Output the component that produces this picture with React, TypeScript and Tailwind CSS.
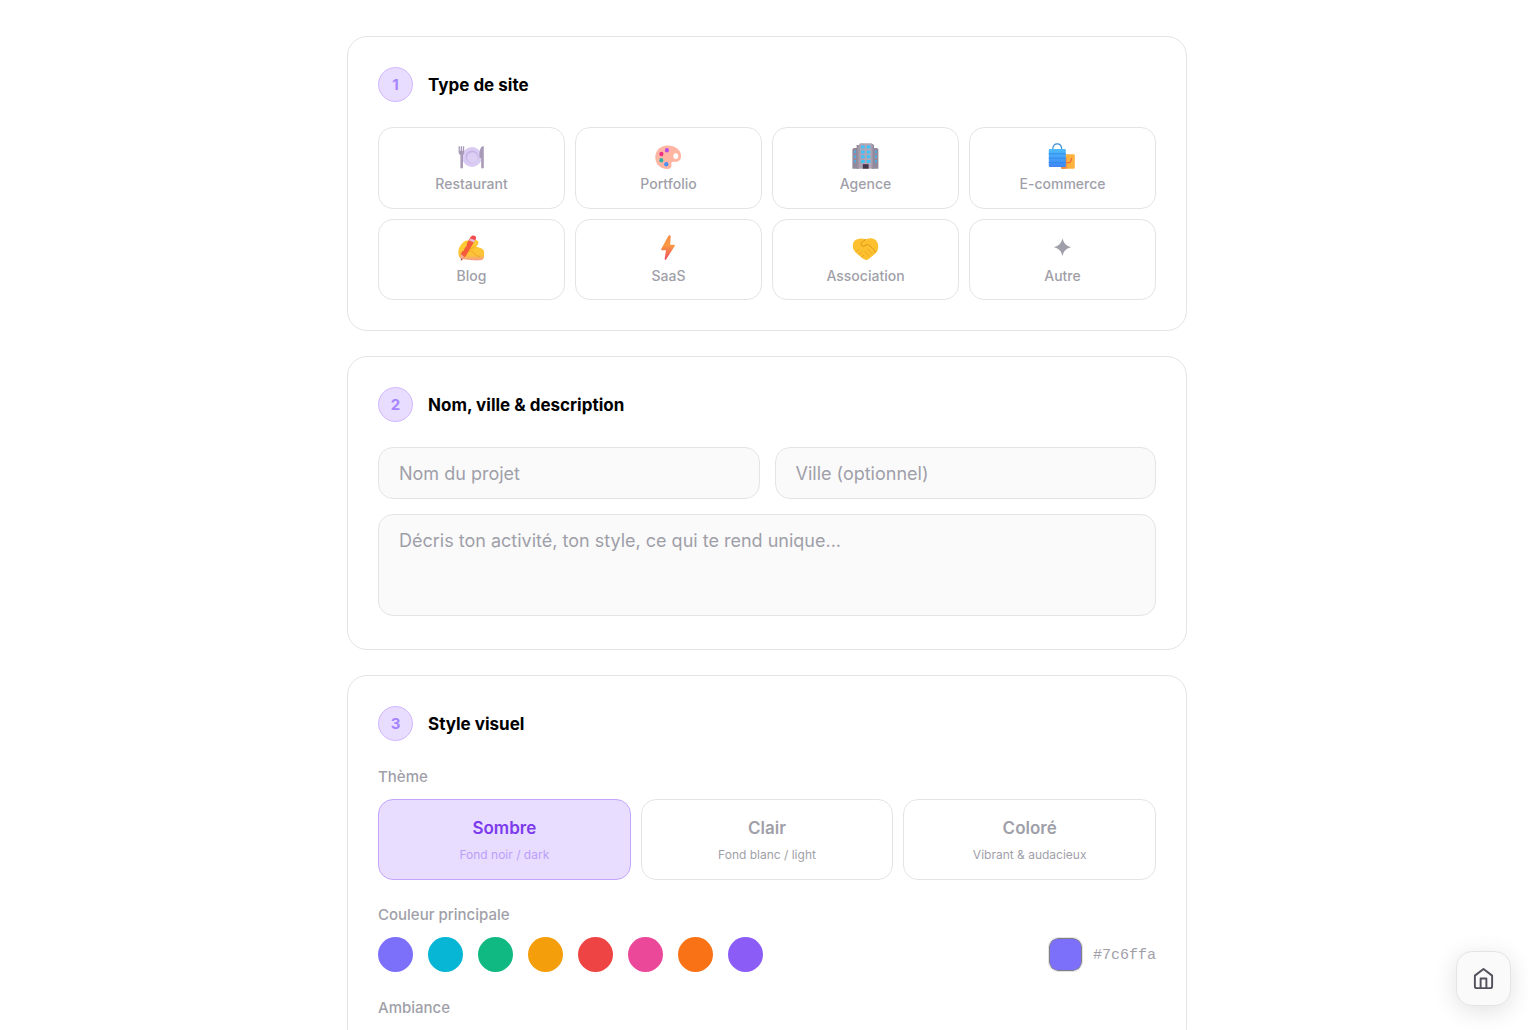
import { useState } from "react";
import type { ReactNode } from "react";

const RestaurantIcon = () => (
  <svg width="28" height="28" viewBox="1 0 28 28" aria-hidden="true">
    <circle cx="15" cy="14" r="9.9" fill="#d9cbf3" />
    <circle cx="15" cy="14" r="6.4" fill="#c6b5e6" />
    <circle cx="15.5" cy="14.7" r="5.4" fill="#dccff4" />
    <path
      d="M1.6 3.2h1.3v4.6h.8V3.200h1.400v4.600h.8V3.200h1.300v6.400c0 1.300-.6 2-1.200 2.400v12.500c0 1.200-2.600 1.200-2.600 0V12c-1-.4-1.800-1.100-1.800-2.400z"
      fill="#a99bb8"
    />
    <path
      d="M26.800 3.400v21.100c0 1.200-2.600 1.200-2.600 0V15h-1.600c-.5-4 0-12.600 4.200-11.600z"
      fill="#a99bb8"
    />
  </svg>
);

const PortfolioIcon = () => (
  <svg width="28" height="28" viewBox="1 1 28 28" aria-hidden="true">
    <path
      d="M13.500 3.600C6.500 3.600 1.300 8.600 1.300 15.300c0 6.700 5 11.700 11.700 11.700 3.400 0 4.900-1.800 4.400-4.500-.4-2.200.6-3 2.700-2.700 4.200.6 7-1.600 7-5.700 0-6-6-10.500-13.600-10.500zM21.800 11.200a2.500 2.900 0 1 1 0 5.800 2.500 2.900 0 0 1 0-5.800z"
      fill="#ffb5a2"
      fillRule="evenodd"
    />
    <ellipse cx="12.900" cy="8.200" rx="2" ry="2.200" fill="#b54be6" />
    <ellipse cx="7.400" cy="12" rx="2.100" ry="2.200" fill="#ee2f86" />
    <ellipse cx="7.300" cy="18.300" rx="2" ry="2.300" fill="#2fb3ac" />
    <ellipse cx="12.300" cy="22.200" rx="2.100" ry="2.300" fill="#4a8ff5" />
  </svg>
);

const AgenceIcon = () => (
  <svg width="28" height="28" viewBox="0 0 28 28" aria-hidden="true">
    <defs>
      <linearGradient id="tower">
        <stop offset="0" stopColor="#8f8796" />
        <stop offset=".2" stopColor="#aca2b3" />
        <stop offset=".8" stopColor="#b3a9ba" />
        <stop offset="1" stopColor="#8d8396" />
      </linearGradient>
    </defs>
    <path d="M.4 6.200l1.200-1.200h5v20.700H.4zM20 5h5l1.400 1.200v19.500H20z" fill="#93899c" />
    <path
      d="M2.200 7.500h1.600v2.600H2.200zM2.200 12.300h1.600v2.600H2.200zM2.200 17.100h1.600v2.600H2.200zM23 7.500h1.600v2.600H23zM23 12.300h1.600v2.600H23zM23 17.100h1.600v2.600H23z"
      fill="#42b2ee"
    />
    <path d="M8 .2h11.500L22 2v23.700H4.600V2H7z" fill="url(#tower)" />
    <g fill="#3fc3fa">
      <rect x="9" y="2.600" width="3.600" height="3" rx=".6" />
      <rect x="14.800" y="2.600" width="3.600" height="3" rx=".6" />
      <rect x="9" y="7.400" width="3.600" height="3" rx=".6" />
      <rect x="14.800" y="7.400" width="3.600" height="3" rx=".6" />
      <rect x="9" y="12.200" width="3.600" height="3" rx=".6" />
      <rect x="14.800" y="12.200" width="3.600" height="3" rx=".6" />
      <rect x="9" y="17" width="3.600" height="3" rx=".6" />
      <rect x="14.800" y="17" width="3.600" height="3" rx=".6" />
    </g>
    <rect x="10.800" y="21.200" width="5.800" height="4.500" fill="#44364f" />
  </svg>
);

const ShopIcon = () => (
  <svg
    width="28"
    height="28"
    viewBox="1 0 28 28"
    className="overflow-visible"
    aria-hidden="true"
  >
    <defs>
      <linearGradient id="bag" x1="0" y1="0" x2="0" y2="1">
        <stop offset="0" stopColor="#4dbcfb" />
        <stop offset="1" stopColor="#3f86f5" />
      </linearGradient>
    </defs>
    <rect x="13" y="11.300" width="13.800" height="14.500" rx="1" fill="#fdb13f" />
    <path d="M13 24h4.500v-9h1.300v10.800H14c-.6 0-1-.4-1-1z" fill="#f28b45" />
    <path
      d="M18.500 19.500c3 1.200 5-.6 5-4.500"
      fill="none"
      stroke="#ee6b35"
      strokeWidth="1.200"
    />
    <path
      d="M4.800 9.500V6C4.800 2.500 6.800.8 9.200.8s4.400 1.700 4.400 5.200v3.500"
      fill="none"
      stroke="#3a8ed3"
      strokeWidth="1.200"
    />
    <rect x=".8" y="6" width="17" height="18" rx="1" fill="url(#bag)" />
    <path
      d="M.8 10.800h17M.8 15.200h17M.8 19.600h17"
      stroke="#2d83ea"
      strokeWidth=".8"
    />
  </svg>
);

const BlogIcon = () => (
  <svg width="28" height="28" viewBox="1 0 28 28" aria-hidden="true">
    <defs>
      <linearGradient id="hand" x1="0" y1="0" x2="0" y2="1">
        <stop offset="0" stopColor="#fdca2e" />
        <stop offset=".75" stopColor="#fcc23a" />
        <stop offset="1" stopColor="#f79a8e" />
      </linearGradient>
    </defs>
    <path
      d="M1.600 15c.6-3.400 4-8.200 8-9.400 1.700-.5 4 .3 4.500 2l3.600-2.400c1.900-.8 4 .5 3.600 2.800-.3 1.700-1 2.600-2 3.600 2.600 1.600 4.300 1 6.400 2.600 1.400 1 1.500 2.500 1.400 4.200-.1 2.400.2 5-1.300 6.200-1.700 1-7.500.9-10.500.7l-11-1.300C1.500 22.500 1 18.700 1.600 15z"
      fill="url(#hand)"
    />
    <path
      d="M10.500 16.500c3-1.400 5.500-.2 6.500 1.500 1 2 2.800 3.500 5.500 3.400M17.500 12c-2 1.300-3.700 1.800-5 1.800"
      fill="none"
      stroke="#f0a222"
      strokeWidth=".9"
      strokeLinecap="round"
    />
    <path d="M13.400 2.200c.9-2 6-.2 5.200 2L9 20.800l-4.600 4.700-.6-6.500z" fill="#f45c3c" />
    <path d="M14.800.8c1.500-1 4.600.3 4.300 2.200l-.9 2.200-4.600-1.800z" fill="#f24a52" />
    <path d="M13.400 3.500l4.700 1.800-1.100 2.200-4.700-2z" fill="#e7b9d4" />
    <path d="M3.800 19l3.600 2.900-3.300 3.600z" fill="#f3a995" />
    <path d="M3.900 23.200l1.500 1-1.500 1.500z" fill="#82424f" />
    <path
      d="M1.800 16.200C2.500 13 5 9.500 7.600 8.300c2.300-.2 3 1.600 1.800 3-1.400 1.500-2.400 2.800-2.900 4.800z"
      fill="#fecb35"
    />
  </svg>
);

const BoltIcon = () => (
  <svg width="28" height="28" viewBox="1 0 28 28" aria-hidden="true">
    <defs>
      <linearGradient id="bolt" x1="0" y1="0" x2="0" y2="1">
        <stop offset="0" stopColor="#f68b4c" />
        <stop offset=".4" stopColor="#fb9a40" />
        <stop offset="1" stopColor="#f0495f" />
      </linearGradient>
    </defs>
    <path
      d="M14.300.9L7.200 14c-.3.700 0 1.200.6 1.200H12l-1.300 8.600c-.1 1.200.9 1.500 1.500.5L20.700 11c.4-.7.100-1.200-.6-1.200h-4l.6-8.400c.1-1.300-1.600-1.700-2.400-.5z"
      fill="url(#bolt)"
    />
  </svg>
);

const HandshakeIcon = () => (
  <svg width="28" height="28" viewBox="0 0 28 28" aria-hidden="true">
    <path
      d="M5 4.200c3-1.200 6.400-1 8.700.2 2.600-1.200 6-1.500 8.800-.2 2.700 1.200 3.800 4.500 3.700 7.800-.1 2.800-.9 4.800-2.900 6.500l-5 4.300c-1.400 1.200-2.400 2.200-3.800 2.200-1.700 0-3.300-1.200-4.700-2.300L4.300 18C1.800 15.800.9 13.800.8 11 .7 8 2 5.400 5 4.200z"
      fill="#fdc02f"
    />
    <path
      d="M13.700 4.400L9.500 7.700c-1.600 1.500.5 4.400 2.600 3.300l3.300-1.600c3 1.200 6 4.300 8 7.600"
      fill="none"
      stroke="#dd951d"
      strokeWidth="1"
      strokeLinecap="round"
    />
    <path
      d="M15.500 14l4.600 4.800M12.700 16.500l4.500 4.500M4.200 17l2.200-2.500M7 19.500l2.200-2.500M10 22l2-2.300"
      fill="none"
      stroke="#eba026"
      strokeWidth=".9"
      strokeLinecap="round"
    />
  </svg>
);

const StarIcon = () => (
  <svg width="28" height="28" viewBox="1 0 28 28" aria-hidden="true">
    <path
      d="M14.500 3.600c1.500 5.200 3.300 7.100 8.600 8.700-5.300 1.600-7.100 3.500-8.600 8.700-1.500-5.200-3.300-7.100-8.600-8.700 5.300-1.600 7.100-3.500 8.600-8.700z"
      fill="#9f9fa9"
    />
  </svg>
);

const siteTypes = [
  { label: "Restaurant", icon: <RestaurantIcon /> },
  { label: "Portfolio", icon: <PortfolioIcon /> },
  { label: "Agence", icon: <AgenceIcon /> },
  { label: "E-commerce", icon: <ShopIcon /> },
  { label: "Blog", icon: <BlogIcon /> },
  { label: "SaaS", icon: <BoltIcon /> },
  { label: "Association", icon: <HandshakeIcon /> },
  { label: "Autre", icon: <StarIcon /> },
];

const themes = [
  { name: "Sombre", hint: "Fond noir / dark" },
  { name: "Clair", hint: "Fond blanc / light" },
  { name: "Coloré", hint: "Vibrant & audacieux" },
];

const colors = [
  { value: "#7c6ffa", className: "bg-[#7c6ffa]" },
  { value: "#06b6d4", className: "bg-[#06b6d4]" },
  { value: "#10b981", className: "bg-[#10b981]" },
  { value: "#f59e0b", className: "bg-[#f59e0b]" },
  { value: "#ef4444", className: "bg-[#ef4444]" },
  { value: "#ec4899", className: "bg-[#ec4899]" },
  { value: "#f97316", className: "bg-[#f97316]" },
  { value: "#8b5cf6", className: "bg-[#8b5cf6]" },
];

const fieldClass =
  "block w-full rounded-[15px] border border-[#e4e4e7] bg-[#fafafa] px-5 text-[18px] text-black outline-none placeholder:text-[#9f9fa9]";

type StepProps = { number: number; title: string; children: ReactNode };

const Step = ({ number, title, children }: StepProps) => {
  return (
    <section className="rounded-[20px] border border-[#e4e4e7] bg-white p-[30px]">
      <div className="mb-[25px] flex items-center gap-[15px]">
        <span className="flex size-[35px] items-center justify-center rounded-full border border-[#d0b8fd] bg-[#e8dcff] text-[15px] leading-[23px] font-bold text-[#a684ff]">
          {number}
        </span>
        <h2 className="text-[17px] leading-[26px] font-bold text-black">
          {title}
        </h2>
      </div>
      {children}
    </section>
  );
};

const App = () => {
  const [siteType, setSiteType] = useState("");
  const [theme, setTheme] = useState("Sombre");
  const [color, setColor] = useState("#7c6ffa");

  return (
    <div className="min-h-screen bg-white pt-9 pb-12 pl-1.5 font-['Inter',sans-serif]">
      <main className="mx-auto flex w-full max-w-[840px] flex-col gap-[25px]">
        <Step number={1} title="Type de site">
          <div className="grid grid-cols-4 grid-rows-[82px_81px] gap-[10px]">
            {siteTypes.map((item) => (
              <button
                key={item.label}
                type="button"
                aria-pressed={siteType === item.label}
                onClick={() => setSiteType(item.label)}
                className="flex flex-col items-center gap-[3px] rounded-[15px] border border-[#e4e4e7] pt-[15px] text-[14px] leading-5 font-medium text-[#9f9fa9]"
              >
                {item.icon}
                {item.label}
              </button>
            ))}
          </div>
        </Step>

        <Step number={2} title="Nom, ville & description">
          <div className="grid grid-cols-2 gap-[15px]">
            <input
              type="text"
              aria-label="Nom du projet"
              placeholder="Nom du projet"
              className={`${fieldClass} h-[52px] leading-[26px]`}
            />
            <input
              type="text"
              aria-label="Ville"
              placeholder="Ville (optionnel)"
              className={`${fieldClass} h-[52px] leading-[26px]`}
            />
            <textarea
              aria-label="Description"
              placeholder="Décris ton activité, ton style, ce qui te rend unique..."
              className={`${fieldClass} col-span-2 mb-[3px] h-[102px] resize-none py-3 leading-7`}
            />
          </div>
        </Step>

        <Step number={3} title="Style visuel">
          <h3 className="mb-3 text-[15px] leading-[21px] font-medium text-[#9f9fa9]">
            Thème
          </h3>
          <div className="mb-6 grid grid-cols-3 gap-[10px]">
            {themes.map((item) => (
              <button
                key={item.name}
                type="button"
                aria-pressed={theme === item.name}
                onClick={() => setTheme(item.name)}
                className={`flex h-[81px] flex-col items-center justify-center gap-1 rounded-[15px] border ${
                  theme === item.name
                    ? "border-[#c4a5fb] bg-[#e8dcff] text-[#7c3aed]"
                    : "border-[#e4e4e7] text-[#9f9fa9]"
                }`}
              >
                <span className="text-[17px] leading-[26px] font-semibold">
                  {item.name}
                </span>
                <span
                  className={`text-[12px] leading-5 ${
                    theme === item.name ? "text-[#bc9ffa]" : "text-[#9f9fa9]"
                  }`}
                >
                  {item.hint}
                </span>
              </button>
            ))}
          </div>

          <h3 className="mb-3 text-[15px] leading-[21px] font-medium text-[#9f9fa9]">
            Couleur principale
          </h3>
          <div className="mb-[25px] flex items-center gap-[15px]">
            {colors.map((item) => (
              <button
                key={item.value}
                type="button"
                aria-label={item.value}
                onClick={() => setColor(item.value)}
                className={`size-[35px] rounded-full ${item.className}`}
              />
            ))}
            <label className="ml-auto flex items-center gap-[10px] font-['Liberation_Mono',monospace] text-[15px] text-[#9f9fa9]">
              <input
                type="color"
                value={color}
                onChange={(e) => setColor(e.target.value)}
                className="size-[35px] overflow-hidden rounded-[10px] border border-[#e4e4e7] [&::-webkit-color-swatch]:rounded-[9px] [&::-webkit-color-swatch]:border-[#808080] [&::-webkit-color-swatch-wrapper]:p-0"
              />
              <span className="pt-[3px]">{color}</span>
            </label>
          </div>

          <h3 className="text-[15px] leading-[21px] font-medium text-[#9f9fa9]">
            Ambiance
          </h3>
        </Step>
      </main>

      <a
        href="#"
        aria-label="Accueil"
        className="fixed right-[17px] bottom-6 flex size-[55px] items-center justify-center rounded-[16px] border border-[#e4e4e7] bg-[#fafafa] text-[#52525c] shadow-[0_5px_25px_rgba(0,0,0,0.12)]"
      >
        <svg
          width="23"
          height="23"
          viewBox="0 0 24 24"
          fill="none"
          stroke="currentColor"
          strokeWidth="2"
          strokeLinecap="round"
          strokeLinejoin="round"
        >
          <path d="m3 9 9-7 9 7v11a2 2 0 0 1-2 2H5a2 2 0 0 1-2-2z" />
          <path d="M9 22V12h6v10" />
        </svg>
      </a>
    </div>
  );
};

export default App;
